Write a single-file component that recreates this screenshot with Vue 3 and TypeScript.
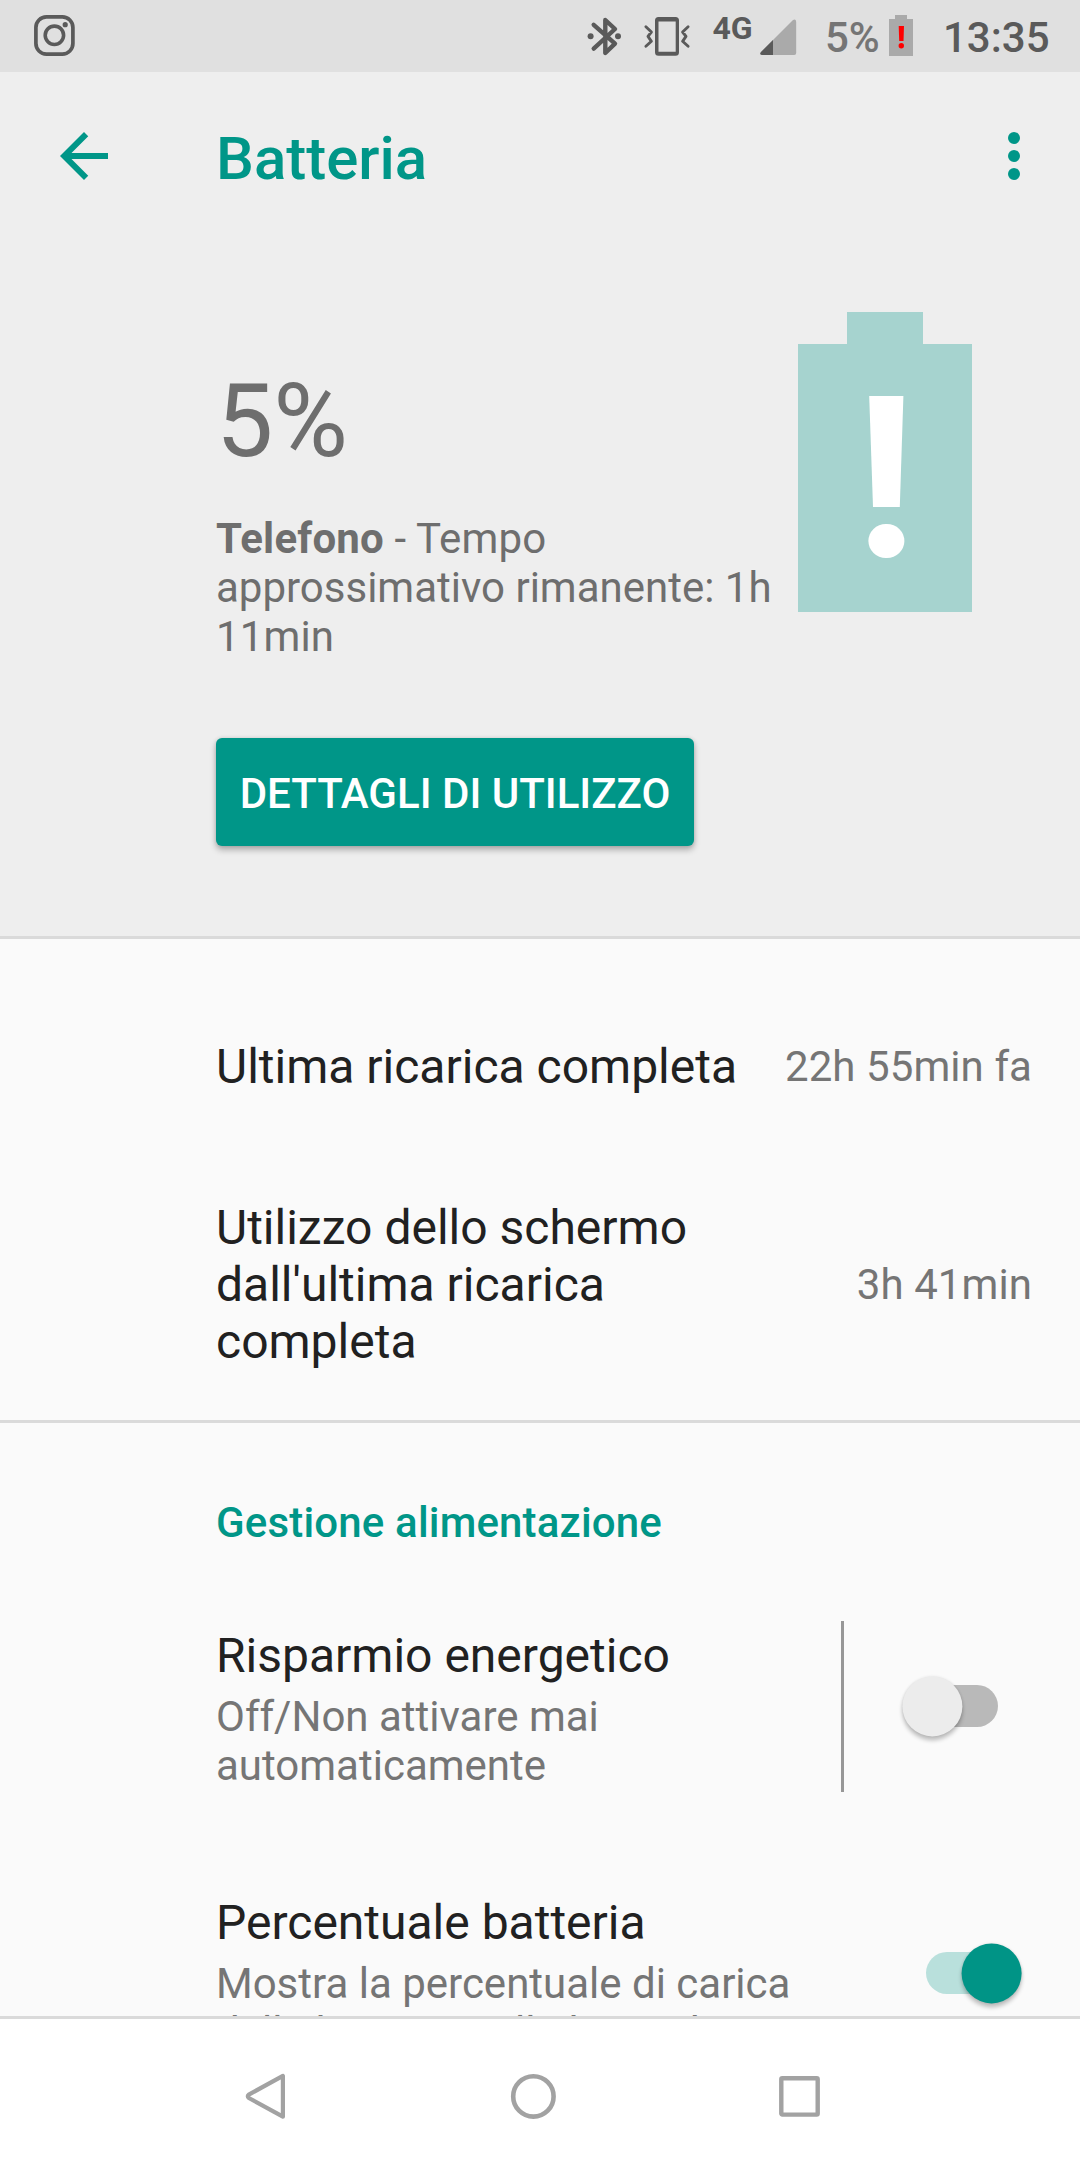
<script setup lang="ts">
import { ref } from 'vue'

interface UsageRow {
  title: string[]
  value: string
}

const level = ref(5)
const powerSaver = ref(false)
const showPercentage = ref(true)

const usage: UsageRow[] = [
  { title: ['Ultima ricarica completa'], value: '22h 55min fa' },
  { title: ['Utilizzo dello schermo', "dall'ultima ricarica", 'completa'], value: '3h 41min' },
]
</script>

<template>
  <div class="screen">
    <header class="status">
      <svg class="insta" width="41" height="42" viewBox="0 0 41 42">
        <rect x="1.9" y="1.9" width="37" height="37.2" rx="10.5" fill="none" stroke="#5a5a5a" stroke-width="3.7" />
        <circle cx="20.4" cy="20.3" r="9.2" fill="none" stroke="#5a5a5a" stroke-width="3.6" />
        <circle cx="31.2" cy="9.7" r="2.6" fill="#5a5a5a" />
      </svg>
      <div class="status-right">
        <svg class="bt" width="34" height="40" viewBox="587 17 34 40">
          <path d="M593.7 24.8 615 43.6 605.3 53V20L615 29 593.7 48.6" fill="none" stroke="#5a5a5a" stroke-width="4.4" stroke-linecap="round" stroke-linejoin="round" />
          <circle cx="590.6" cy="36.3" r="3" fill="#5a5a5a" />
          <circle cx="618" cy="36.3" r="3" fill="#5a5a5a" />
        </svg>
        <svg class="vib" width="46" height="40" viewBox="644 17 46 40">
          <path fill="#5a5a5a" fill-rule="evenodd" d="M658.5 17h17a3.5 3.5 0 0 1 3.5 3.5v31.7a3.5 3.5 0 0 1-3.5 3.5h-17a3.5 3.5 0 0 1-3.5-3.5V20.5a3.5 3.5 0 0 1 3.5-3.5zM658.5 21.4V51.8h17.2V21.4z" />
          <path d="M645.9 26.7 651.4 32 648 36.4 651.4 41.3 645.9 46.3M688.1 26.7 682.6 32 686 36.4 682.6 41.3 688.1 46.3" fill="none" stroke="#5a5a5a" stroke-width="2.9" stroke-linecap="round" stroke-linejoin="round" />
        </svg>
        <span class="net">4G</span>
        <svg class="signal" width="37" height="37" viewBox="0 0 37 37">
          <path d="M1 33 33 1Q36 -.5 36.2 3V34Q36.2 36 34.2 36H2Q-1 35.5 1 33z" fill="#aaa" />
          <path d="M1 33 13 21V36H2Q-1 35.5 1 33z" fill="#5a5a5a" />
        </svg>
        <span class="pct">{{ level }}%</span>
        <svg class="mini" width="24" height="41" viewBox="0 0 24 41">
          <path d="M6 0h12v4h6v37H0V4h6z" fill="#aaa" />
          <path d="M9.7 11h5.3l-.5 15h-4.3z" fill="#f00" />
          <circle cx="12.3" cy="30.7" r="2.7" fill="#f00" />
        </svg>
        <span class="clock">13:35</span>
      </div>
    </header>

    <section class="hero">
      <nav class="appbar">
        <svg class="back" width="48" height="48" viewBox="4 4 16 16">
          <path d="M20 11H7.830l5.590-5.590L12 4l-8 8 8 8 1.410-1.410L7.830 13H20z" fill="#009688" />
        </svg>
        <h1>Batteria</h1>
        <svg class="more" width="12" height="48" viewBox="0 0 12 48">
          <circle v-for="y in [6, 24, 42]" :key="y" cx="6" :cy="y" r="6" fill="#009688" />
        </svg>
      </nav>
      <div class="summary">
        <div class="summary-text">
          <div class="level">{{ level }}%</div>
          <p><span class="wide"><b>Telefono</b> - Tempo</span><br>approssimativo rimanente: 1h<br><span class="wide">11min</span></p>
        </div>
        <svg class="battery" width="174" height="300" viewBox="0 0 174 300">
          <path d="M49 0h76v32h49v268H0V32h49z" fill="#a6d3cf" />
          <path d="M71.2 84h34.2L101.8 195H75z" fill="#fff" />
          <rect x="70.4" y="212" width="36" height="34" rx="17.5" ry="17" fill="#fff" />
        </svg>
      </div>
      <button class="details">DETTAGLI DI UTILIZZO</button>
    </section>

    <main class="list">
      <section class="usage">
        <div v-for="row in usage" :key="row.value" class="usage-row">
          <div class="title"><div v-for="line in row.title" :key="line">{{ line }}</div></div>
          <div class="value">{{ row.value }}</div>
        </div>
      </section>

      <h2>Gestione alimentazione</h2>

      <div class="pref saver">
        <div class="pref-text">
          <div class="title">Risparmio energetico</div>
          <div class="sub">Off/Non attivare mai<br>automaticamente</div>
        </div>
        <div class="rule"></div>
        <div class="switch" :class="{ on: powerSaver }" @click="powerSaver = !powerSaver"><i></i></div>
      </div>

      <div class="pref percent">
        <div class="pref-text">
          <div class="title">Percentuale batteria</div>
          <div class="sub">Mostra la percentuale di carica<br>della batteria nella barra di stato</div>
        </div>
        <div class="switch" :class="{ on: showPercentage }" @click="showPercentage = !showPercentage"><i></i></div>
      </div>
    </main>

    <footer class="navbar">
      <svg width="42" height="48" viewBox="0 0 42 48">
        <path d="M38.9 3.9V44.700L4.800 26Q2.800 24.300 4.800 22.600z" fill="none" stroke="#a2a2a2" stroke-width="4.200" stroke-linejoin="round" />
      </svg>
      <svg width="46" height="46" viewBox="0 0 46 46">
        <circle cx="24.4" cy="23.4" r="20.200" fill="none" stroke="#a2a2a2" stroke-width="4.600" />
      </svg>
      <svg width="42" height="42" viewBox="0 0 42 42">
        <rect x="3.300" y="3.200" width="36.400" height="36.400" rx="1" fill="none" stroke="#a2a2a2" stroke-width="4.400" />
      </svg>
    </footer>
  </div>
</template>

<style>
html, body { margin: 0; background: #fff; }
</style>

<style scoped>
.screen {
  display: flex;
  flex-direction: column;
  width: 1080px;
  height: 2160px;
  overflow: hidden;
  background: #fafafa;
  font-family: Roboto, sans-serif;
  font-size: 42px;
  line-height: 49px;
  color: #212121;
}
svg { display: block; flex: none; overflow: visible; }
.status {
  display: flex;
  justify-content: space-between;
  flex: none;
  box-sizing: border-box;
  height: 72px;
  padding: 13px 30px 0 34px;
  background: #e0e0e0;
  color: #5a5a5a;
  font-weight: 500;
  white-space: nowrap;
}
.insta { margin-top: 2px; }
.status-right { display: flex; align-items: flex-start; }
.bt { margin: 4px 23px 0 0; }
.vib { margin: 4px 22.5px 0 0; }
.net { width: 43px; margin-right: 4.5px; font-size: 32px; font-weight: 700; line-height: 38px; margin-top: -4px; }
.signal { margin-top: 6px; }
.pct { width: 54px; margin-left: 28px; color: #757575; }
.mini { margin: 2px 30px 0 10px; }
.clock { width: 107px; }

.hero {
  display: flex;
  flex-direction: column;
  flex: none;
  box-sizing: border-box;
  height: 867px;
  border-bottom: 3px solid #dadada;
  background: #eee;
}
.appbar {
  display: flex;
  align-items: center;
  flex: none;
  height: 168px;
  padding: 0 60px;
}
h1 {
  flex: 1;
  margin: 5px 0 0 108px;
  color: #009688;
  font-size: 60px;
  font-weight: 500;
  line-height: 71px;
}
.summary { display: flex; height: 498px; padding-left: 216px; }
.summary-text { width: 582px; padding-top: 121px; color: #6e6e6e; white-space: nowrap; }
.level { font-size: 102px; line-height: 120px; }
.summary p { margin: 33px 0 0; }
.wide { letter-spacing: .15px; }
.battery { margin-top: 72px; }
.details {
  width: 478px;
  height: 108px;
  margin-left: 216px;
  padding: 3px 0 0;
  border: 0;
  border-radius: 6px;
  background: #009688;
  box-shadow: 0 4px 6px rgba(0, 0, 0, .27), 0 0 4px rgba(0, 0, 0, .12);
  color: #fff;
  font: 500 42px/49px Roboto, sans-serif;
  white-space: nowrap;
}

.list { flex: none; height: 1077px; overflow: hidden; white-space: nowrap; }
.usage {
  box-sizing: border-box;
  height: 484px;
  padding-top: 99px;
  border-bottom: 3px solid #dadada;
}
.usage-row {
  display: flex;
  align-items: center;
  justify-content: space-between;
  margin-bottom: 104px;
  padding: 0 48px 0 216px;
}
.title { font-size: 48px; line-height: 57px; }
.value, .sub { color: #757575; }
.value { letter-spacing: .08px; }
h2 {
  margin: 75px 0 0 216px;
  color: #009688;
  font-size: 42px;
  font-weight: 500;
  line-height: 49px;
  letter-spacing: .17px;
}
.pref { display: flex; padding-left: 216px; }
.saver { margin-top: 74px; }
.saver .title { margin-top: 6px; }
.pref-text { width: 710px; }
.saver .pref-text { width: 625px; }
.sub { margin-top: 8px; }
.rule { width: 3px; height: 171px; background: #979797; }
.percent { margin-top: 102px; }

.switch {
  display: flex;
  align-items: center;
  box-sizing: border-box;
  width: 72px;
  height: 42px;
  border-radius: 21px;
}
.switch i {
  flex: none;
  width: 60px;
  height: 60px;
  border-radius: 50%;
  background: #ececec;
  box-shadow: 0 4px 4px rgba(0, 0, 0, .24), 0 0 3px rgba(0, 0, 0, .1);
}
.switch:not(.on) { margin: 64px 0 0 82px; background: #b9b9b9; }
.switch:not(.on) i { margin-left: -24px; transform: translate(.4px, .4px); }
.switch.on { margin: 58px 0 0; background: #b9e0dc; }
.switch.on i { margin-left: 36px; background: #009486; transform: translate(-.4px, .4px); }

.navbar {
  display: flex;
  align-items: center;
  justify-content: space-between;
  flex: 1;
  padding: 13px 260px 0 244px;
  border-top: 3px solid #dadada;
  background: #fff;
}
</style>
